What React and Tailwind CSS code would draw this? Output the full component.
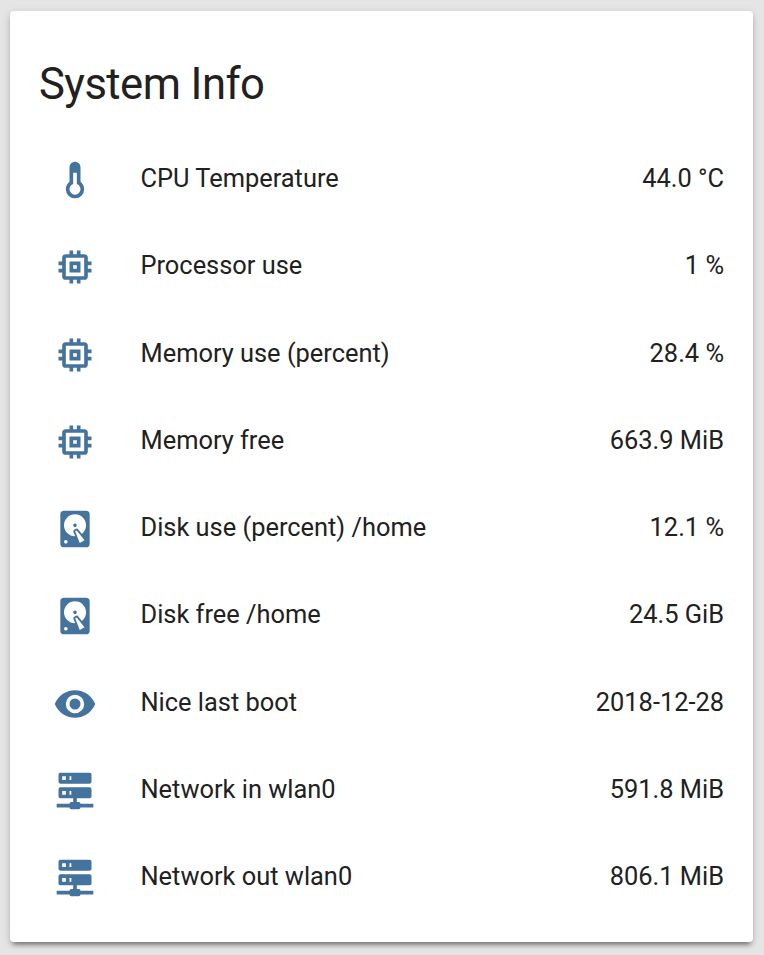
import React from "react";

// Material Design icon outlines on a 24-unit grid.
const ICONS = {
  thermometer:
    "M17 17a5 5 0 0 1-10 0c0-1.64.79-3.09 2-4V5a3 3 0 0 1 6 0v8c1.21.91 2 2.36 2 4m-6-9v6.17c-1.17.41-2 1.53-2 2.83a3 3 0 0 0 6 0c0-1.3-.83-2.42-2-2.83V8h-2Z",
  memory:
    "M17 17H7V7h10m4 4V9h-2V7a2 2 0 0 0-2-2h-2V3h-2v2h-2V3H9v2H7a2 2 0 0 0-2 2v2H3v2h2v2H3v2h2v2a2 2 0 0 0 2 2h2v2h2v-2h2v2h2v-2h2a2 2 0 0 0 2-2v-2h2v-2h-2v-2m-6 2h-2v-2h2m2-2H9v6h6V9Z",
  harddisk:
    "M6 2h12a2 2 0 0 1 2 2v16a2 2 0 0 1-2 2H6a2 2 0 0 1-2-2V4a2 2 0 0 1 2-2m6 2a6 6 0 0 0-6 6c0 3.31 2.69 6 6.1 6l-.88-2.23a1.01 1.01 0 0 1 .37-1.37l.86-.5a1.01 1.01 0 0 1 1.37.37l1.92 2.42A5.977 5.977 0 0 0 18 10a6 6 0 0 0-6-6m0 5a1 1 0 0 1 1 1 1 1 0 0 1-1 1 1 1 0 0 1-1-1 1 1 0 0 1 1-1m-5 9a1 1 0 0 0-1 1 1 1 0 0 0 1 1 1 1 0 0 0 1-1 1 1 0 0 0-1-1m5.09-4.73 2.49 6.31 2.59-1.5-4.22-5.31-.86.5Z",
  eye:
    "M12 9a3 3 0 0 0-3 3 3 3 0 0 0 3 3 3 3 0 0 0 3-3 3 3 0 0 0-3-3m0 8a5 5 0 0 1-5-5 5 5 0 0 1 5-5 5 5 0 0 1 5 5 5 5 0 0 1-5 5m0-12.5C7 4.5 2.73 7.61 1 12c1.73 4.39 6 7.5 11 7.5s9.27-3.11 11-7.5c-1.73-4.39-6-7.5-11-7.5Z",
  server:
    "M13 18h1a1 1 0 0 1 1 1h7v2h-7a1 1 0 0 1-1 1h-4a1 1 0 0 1-1-1H2v-2h7a1 1 0 0 1 1-1h1v-2H4a1 1 0 0 1-1-1v-4a1 1 0 0 1 1-1h16a1 1 0 0 1 1 1v4a1 1 0 0 1-1 1h-7v2M4 2h16a1 1 0 0 1 1 1v4a1 1 0 0 1-1 1H4a1 1 0 0 1-1-1V3a1 1 0 0 1 1-1m5 4h1V4H9v2m0 8h1v-2H9v2M5 4v2h2V4H5m0 8v2h2v-2H5Z",
};

const ROWS = [
  ["thermometer", "CPU Temperature", "44.0 °C"],
  ["memory", "Processor use", "1 %"],
  ["memory", "Memory use (percent)", "28.4 %"],
  ["memory", "Memory free", "663.9 MiB"],
  ["harddisk", "Disk use (percent) /home", "12.1 %"],
  ["harddisk", "Disk free /home", "24.5 GiB"],
  ["eye", "Nice last boot", "2018-12-28"],
  ["server", "Network in wlan0", "591.8 MiB"],
  ["server", "Network out wlan0", "806.1 MiB"],
];

export default function App() {
  return (
    <main className="h-[955px] w-[764px] bg-[#e5e5e5] px-[10px] pt-[11px] font-[Roboto,sans-serif] text-[#212121]">
      <section className="h-[931px] w-[743px] rounded-[4px] bg-white px-[29px] pt-[47px] shadow-[0_4px_4px_rgba(0,0,0,0.14),0_2px_10px_rgba(0,0,0,0.12),0_6px_4px_-4px_rgba(0,0,0,0.35)]">
        <h1 className="h-[76.4px] text-[43.6px] leading-[54px] tracking-[-0.55px] whitespace-nowrap">System Info</h1>
        <ul>
          {ROWS.map(([icon, label, value]) => (
            <li key={label} className="flex h-[87.25px] items-center text-[25.4px] leading-[36px]">
              <svg viewBox="0 0 24 24" className="mt-[4px] ml-[14px] size-[44px] shrink-0 fill-[#44739e]" aria-hidden="true">
                <path fillRule="evenodd" d={ICONS[icon]} />
              </svg>
              <span className="ml-[43.5px] flex-1 whitespace-nowrap">{label}</span>
              <span className="whitespace-nowrap">{value}</span>
            </li>
          ))}
        </ul>
      </section>
    </main>
  );
}
